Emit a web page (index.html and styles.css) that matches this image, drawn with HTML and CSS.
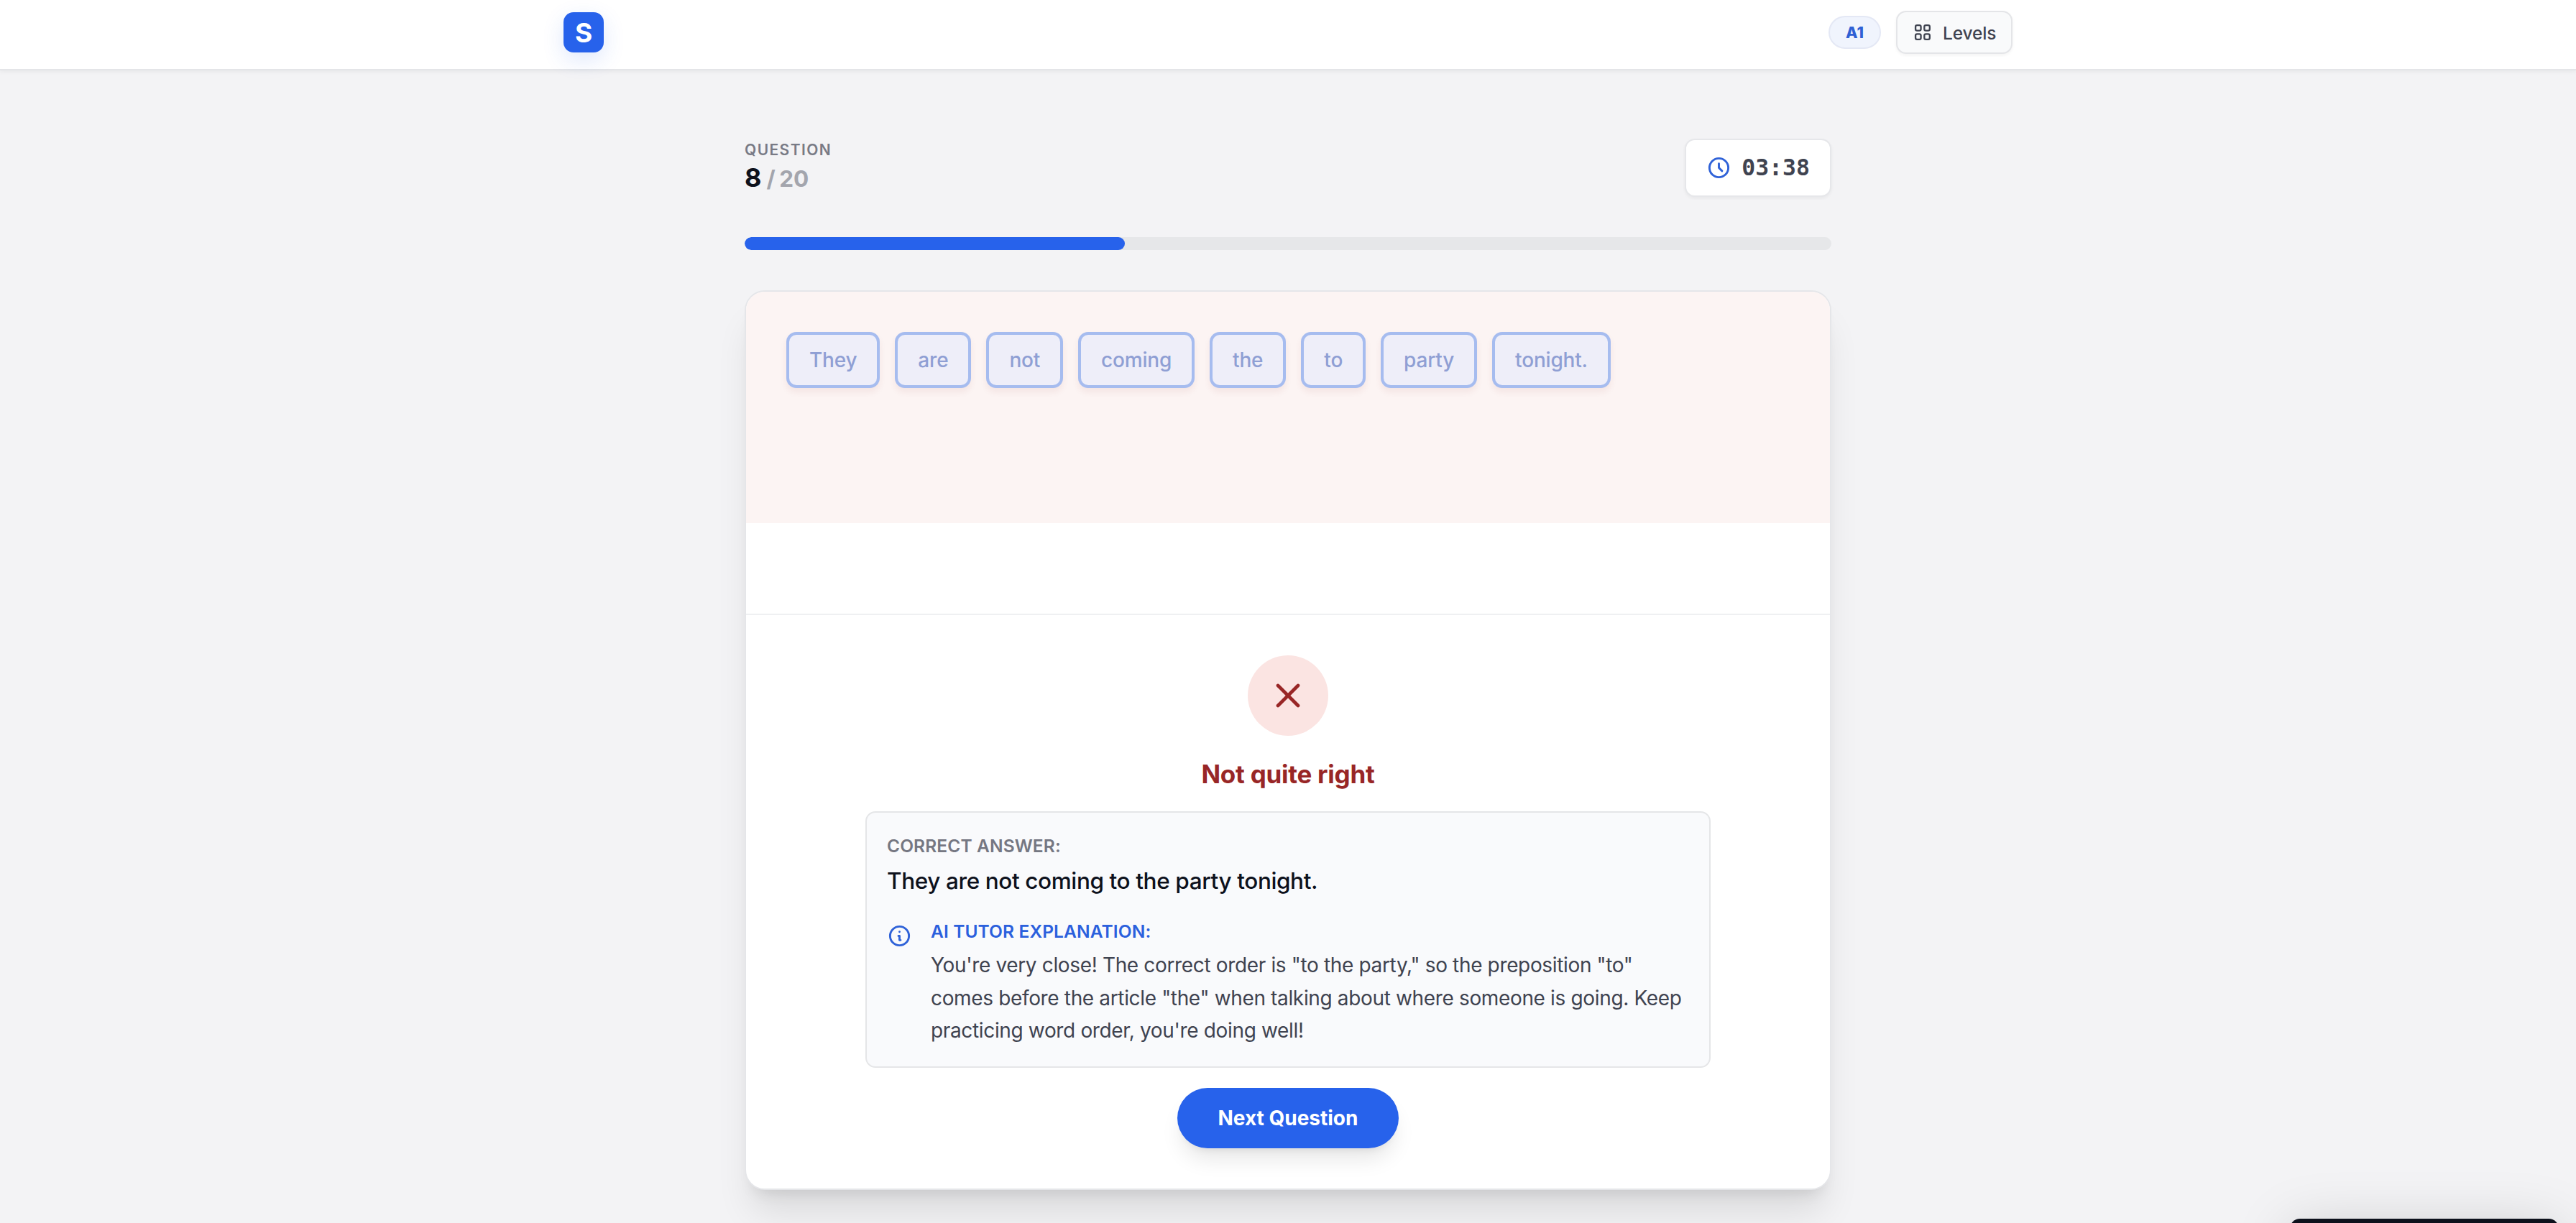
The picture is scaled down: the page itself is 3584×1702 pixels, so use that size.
FILE: index.html
```html
<!DOCTYPE html>
<html lang="en">
<head>
  <meta charset="UTF-8">
  <meta name="viewport" content="width=device-width, initial-scale=1.0">
  <title>Sentence Practice</title>
  <link rel="stylesheet" href="styles.css">
</head>
<body>
  <header class="header">
    <div class="header-inner">
      <div class="logo">S</div>
      <div class="header-right">
        <span class="level-badge">A1</span>
        <button class="levels-btn">
          <svg class="icon-grid" viewBox="0 0 24 24" fill="none" stroke="currentColor" stroke-width="2">
            <rect x="3.5" y="3.5" width="6.4" height="6.4" rx="1.8"/>
            <rect x="14" y="3.5" width="6.4" height="6.4" rx="1.8"/>
            <rect x="3.5" y="14" width="6.4" height="6.4" rx="1.8"/>
            <rect x="14" y="14" width="6.4" height="6.4" rx="1.8"/>
          </svg>
          <span class="levels-text">Levels</span>
        </button>
      </div>
    </div>
  </header>

  <main class="quiz">
    <div class="quiz-top">
      <div class="counter">
        <div class="counter-label">QUESTION</div>
        <div class="counter-value">8<span class="counter-total">/ 20</span></div>
      </div>
      <div class="timer">
        <svg class="icon-clock" viewBox="0 0 24 24" fill="none" stroke="currentColor" stroke-width="2" stroke-linecap="round" stroke-linejoin="round">
          <path d="M12 8v4l3 3m6-3a9 9 0 11-18 0 9 9 0 0118 0z"/>
        </svg>
        <span class="timer-value">03:38</span>
      </div>
    </div>

    <div class="progress">
      <div class="progress-fill" style="width: 35%"></div>
    </div>

    <section class="card">
      <div class="answer-area">
        <button class="word">They</button>
        <button class="word">are</button>
        <button class="word">not</button>
        <button class="word">coming</button>
        <button class="word">the</button>
        <button class="word">to</button>
        <button class="word">party</button>
        <button class="word">tonight.</button>
      </div>
      <div class="word-bank"></div>
      <div class="feedback">
        <div class="feedback-icon">
          <svg class="icon-cross" viewBox="0 0 24 24" fill="none" stroke="currentColor" stroke-width="2" stroke-linecap="round">
            <path d="M6 18L18 6M6 6l12 12"/>
          </svg>
        </div>
        <h2 class="feedback-title">Not quite right</h2>
        <div class="explain">
          <div class="explain-label">CORRECT ANSWER:</div>
          <div class="explain-answer">They are not coming to the party tonight.</div>
          <div class="tutor">
            <svg class="icon-info" viewBox="0 0 24 24" fill="none" stroke="currentColor" stroke-width="2" stroke-linecap="round" stroke-linejoin="round">
              <path d="M13 16h-1v-4h-1m1-4h.01M21 12a9 9 0 11-18 0 9 9 0 0118 0z"/>
            </svg>
            <div class="tutor-body">
              <div class="tutor-label">AI TUTOR EXPLANATION:</div>
              <p class="tutor-text">You're very close! The correct order is "to the party," so the preposition "to"<br>comes before the article "the" when talking about where someone is going. Keep<br>practicing word order, you're doing well!</p>
            </div>
          </div>
        </div>
        <button class="next-btn">Next Question</button>
      </div>
    </section>
  </main>

  <div class="toast"></div>
</body>
</html>
```

FILE: styles.css
```css
* {
  box-sizing: border-box;
}
html {
  font-size: 28px;
}
body {
  margin: 0;
  height: 1702px;
  overflow: hidden;
  background: #f3f3f5;
  font-family: Inter, "Liberation Sans", sans-serif;
  color: #0d111c;
}
button {
  font-family: inherit;
  margin: 0;
}
svg {
  flex: none;
}

/* header */
.header {
  background: #fff;
  height: 98px;
  padding-top: 15px;
  border-bottom: 2px solid #e4e5e8;
  box-shadow: 0 2px 6px rgba(0, 0, 0, 0.05);
}
.header-inner {
  width: 72rem;
  height: 60px;
  margin: 0 auto;
  display: flex;
  align-items: center;
  justify-content: space-between;
}
.logo {
  width: 2rem;
  height: 2rem;
  border-radius: 14px;
  background: #2762eb;
  color: #fff;
  font-size: 37px;
  font-weight: 700;
  line-height: 58px;
  text-align: center;
  box-shadow: 0 10px 30px rgba(39, 98, 235, 0.15);
}
.header-right {
  display: flex;
  align-items: center;
  gap: 0.75rem;
}
.level-badge {
  width: 73px;
  height: 46px;
  line-height: 43px;
  border: 2px solid #e4e8f5;
  border-radius: 23px;
  background: #f0f4fd;
  color: #2f60d4;
  font-size: 21.5px;
  font-weight: 800;
  text-align: center;
}
.levels-btn {
  width: 162px;
  height: 60px;
  padding: 0 0 0 21px;
  display: flex;
  align-items: center;
  gap: 14px;
  border: 2px solid #e4e5e8;
  border-radius: 14px;
  background: #f9fafb;
  color: #3f4350;
  font-size: 24.5px;
  font-weight: 500;
  letter-spacing: -0.15px;
  box-shadow: 0 2px 4px rgba(0, 0, 0, 0.05);
}
.levels-text {
  padding-top: 1px;
}
.icon-grid {
  width: 28px;
  height: 28px;
}

/* question row */
.quiz {
  width: 54rem;
  margin: 0 auto;
  padding-top: 95px;
}
.quiz-top {
  display: flex;
  align-items: center;
  justify-content: space-between;
  margin-bottom: 2rem;
}
.counter-label {
  font-size: 21px;
  line-height: 28px;
  font-weight: 600;
  letter-spacing: 1.4px;
  color: #787a85;
}
.counter-value {
  font-size: 36px;
  line-height: 49px;
  font-weight: 700;
}
.counter-total {
  margin-left: 7px;
  font-size: 31.5px;
  font-weight: 700;
  word-spacing: -2px;
  color: #a3a5ad;
}
.timer {
  height: 81px;
  padding: 0 1rem;
  display: flex;
  align-items: center;
  gap: 0.5rem;
  border: 2px solid #e6e7ea;
  border-radius: 14px;
  background: #fff;
  color: #3f4350;
  font-family: "DejaVu Sans Mono", monospace;
  font-size: 31.5px;
  font-weight: 700;
  box-shadow: 0 2px 4px rgba(0, 0, 0, 0.05);
}
.timer-value {
  padding-bottom: 2px;
}
.icon-clock {
  width: 35px;
  height: 35px;
  color: #2f62d8;
}
.progress {
  height: 18px;
  border-radius: 9px;
  background: #e6e7e9;
  overflow: hidden;
}
.progress-fill {
  height: 100%;
  border-radius: 9px;
  background: #2762eb;
}

/* card */
.card {
  margin-top: 2rem;
  border: 2px solid #e5e6e9;
  border-radius: 28px;
  background: #fff;
  overflow: hidden;
  box-shadow: 0 40px 50px -10px rgba(0, 0, 0, 0.1), 0 16px 20px -12px rgba(0, 0, 0, 0.1);
}
.answer-area {
  height: 322px;
  padding: 56px;
  display: flex;
  align-items: flex-start;
  gap: 0.75rem;
  background: #fcf4f3;
}
.word {
  padding: 14px 28px;
  border: 4px solid #a6bcef;
  border-radius: 14px;
  background: #eeeef9;
  color: #8f9fd4;
  font-size: 28px;
  line-height: 42px;
  font-weight: 500;
  letter-spacing: -0.2px;
  box-shadow: 0 6px 10px rgba(140, 40, 40, 0.07);
}
.word-bank {
  height: 126px;
}
.feedback {
  border-top: 2px solid #eff0f2;
  padding: 56px 0;
  display: flex;
  flex-direction: column;
  align-items: center;
}
.feedback-icon {
  width: 4rem;
  height: 4rem;
  border-radius: 50%;
  background: #fbe4e2;
  color: #982626;
  display: flex;
  align-items: center;
  justify-content: center;
}
.icon-cross {
  width: 2rem;
  height: 2rem;
}
.feedback-title {
  margin: 29px 0 27px;
  font-size: 35px;
  line-height: 49px;
  font-weight: 700;
  letter-spacing: -0.25px;
  color: #982626;
}
.explain {
  width: 42rem;
  padding: 29px 28px 26px;
  border: 2px solid #e5e6e8;
  border-radius: 14px;
  background: #f9fafc;
}
.explain-label,
.tutor-label {
  font-size: 24.5px;
  line-height: 35px;
  font-weight: 600;
  letter-spacing: 0.12px;
  color: #757782;
}
.explain-answer {
  margin: 6px 0 29px;
  font-size: 31.5px;
  line-height: 49px;
  font-weight: 500;
  letter-spacing: -0.39px;
}
.tutor {
  display: flex;
  gap: 26px;
}
.icon-info {
  width: 35px;
  height: 35px;
  margin-top: 6px;
  color: #2f62d8;
}
.tutor-label {
  margin-bottom: 7px;
  color: #2b60dd;
}
.tutor-text {
  margin: 0;
  font-size: 28px;
  line-height: 45.5px;
  letter-spacing: -0.35px;
  color: #3f4350;
  white-space: nowrap;
}
.next-btn {
  width: 308px;
  height: 84px;
  margin-top: 28px;
  padding: 0;
  border: none;
  border-radius: 42px;
  background: #2762eb;
  color: #fff;
  font-size: 28px;
  font-weight: 700;
  box-shadow: 0 20px 30px -6px rgba(0, 0, 0, 0.1), 0 8px 12px -8px rgba(0, 0, 0, 0.1);
}

/* peeking from the bottom edge */
.toast {
  position: fixed;
  right: 24px;
  top: 1696px;
  width: 374px;
  height: 120px;
  border-radius: 14px;
  background: #0d111c;
  box-shadow: 0 12px 80px rgba(0, 0, 0, 0.17);
}
```
